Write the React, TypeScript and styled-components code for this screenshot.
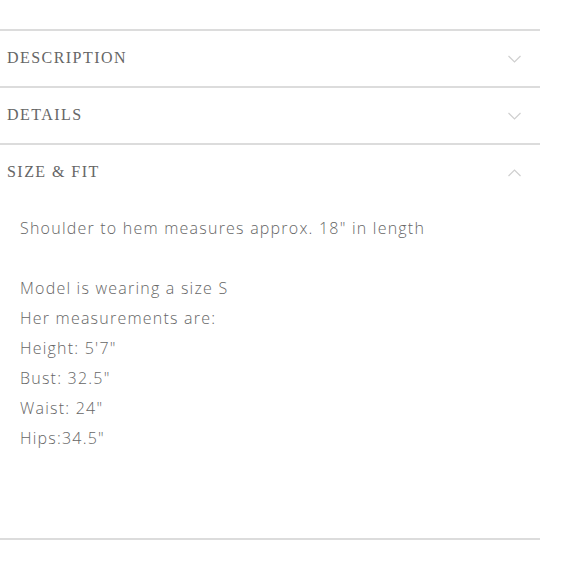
import React from "react";
import styled, { createGlobalStyle } from "styled-components";

const Global = createGlobalStyle`
  html, body { margin: 0; padding: 0; background: #ffffff; }
`;

const Accordion = styled.div`
  width: 540px;
  margin-top: 29px;
  border-bottom: 2px solid #dcdcdc;
`;

const Item = styled.div`
  border-top: 2px solid #dcdcdc;
`;

const Header = styled.div`
  height: 55px;
  box-sizing: border-box;
  display: flex;
  align-items: center;
  justify-content: space-between;
  padding: 0 19px 2px 7px;
`;

const Title = styled.span`
  font-family: "Liberation Serif", serif;
  font-size: 16px;
  letter-spacing: 1.45px;
  color: #666666;
`;

const Chevron = styled.svg`
  width: 13px;
  height: 8px;
  display: block;
  margin-top: 2px;
`;

const Content = styled.div`
  padding: 13px 20px 85px;
  font-family: "Open Sans", sans-serif;
  font-weight: 300;
  font-size: 16px;
  line-height: 30px;
  letter-spacing: 1.22px;
  color: #666666;
`;

const Line = styled.div<{ $gap?: boolean }>`
  margin-bottom: ${(p) => (p.$gap ? "30px" : "0")};
`;

const ChevronIcon = ({ up }: { up?: boolean }) => (
  <Chevron viewBox="0 0 13 8">
    <path
      d={up ? "M0.5 7 L6.5 1 L12.5 7" : "M0.5 1 L6.5 7 L12.5 1"}
      fill="none"
      stroke="#cfcfcf"
      strokeWidth="1.2"
    />
  </Chevron>
);

const lines = [
  "Model is wearing a size S",
  "Her measurements are:",
  "Height: 5'7\"",
  "Bust: 32.5\"",
  "Waist: 24\"",
  "Hips:34.5\"",
];

export default function App() {
  return (
    <>
      <Global />
      <Accordion>
        <Item>
          <Header>
            <Title>DESCRIPTION</Title>
            <ChevronIcon />
          </Header>
        </Item>
        <Item>
          <Header>
            <Title>DETAILS</Title>
            <ChevronIcon />
          </Header>
        </Item>
        <Item>
          <Header>
            <Title>SIZE &amp; FIT</Title>
            <ChevronIcon up />
          </Header>
          <Content>
            <Line $gap>Shoulder to hem measures approx. 18" in length</Line>
            {lines.map((l) => (
              <Line key={l}>{l}</Line>
            ))}
          </Content>
        </Item>
      </Accordion>
    </>
  );
}
